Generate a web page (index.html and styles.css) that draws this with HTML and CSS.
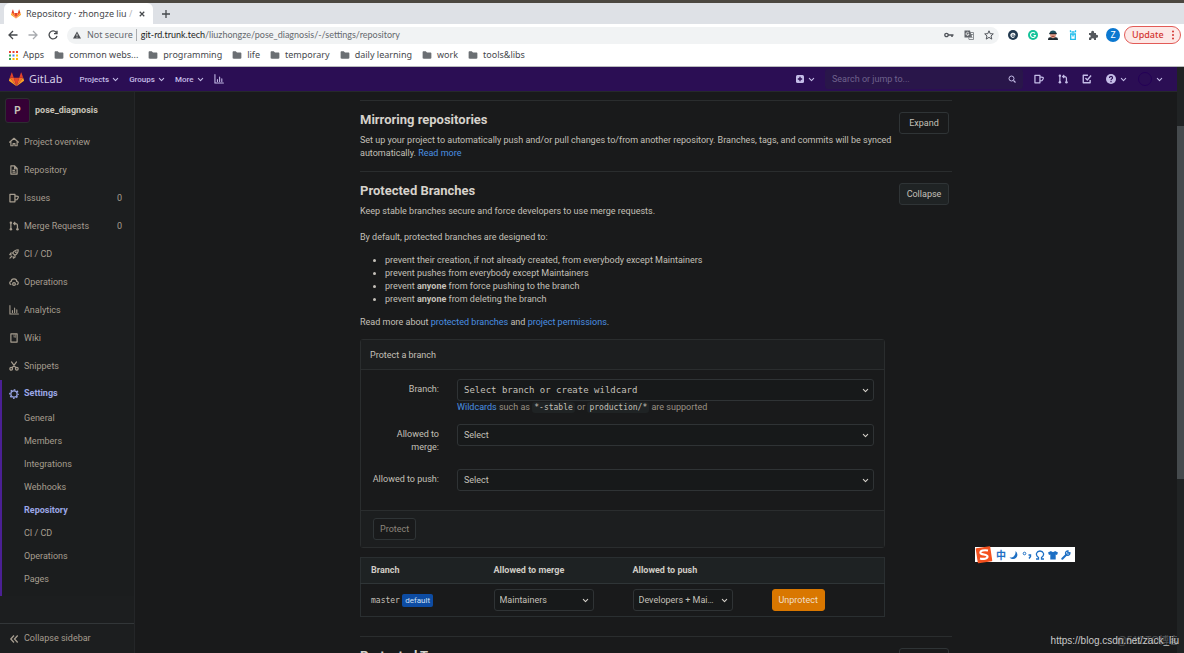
FILE: index.html
```html
<!DOCTYPE html>
<html lang="en">
<head>
<meta charset="utf-8">
<title>Repository · zhongze liu / pose_diagnosis</title>
<link rel="stylesheet" href="styles.css">
</head>
<body>
<svg class="defs" aria-hidden="true">
  <symbol id="tanuki" viewBox="0 0 36 34"><path fill="#e24329" d="M18 33 24.600 13H11.400z"/><path fill="#fc6d26" d="M18 33 11.400 13H2z"/><path fill="#fca326" d="M2 13 0 19c-.2.600 0 1.200.500 1.500L18 33z"/><path fill="#e24329" d="M2 13h9.400L7.400.800c-.2-.600-1.100-.600-1.300 0z"/><path fill="#fc6d26" d="M18 33 24.600 13H34z"/><path fill="#fca326" d="m34 13 2 6c.2.600 0 1.200-.5 1.500L18 33z"/><path fill="#e24329" d="M34 13h-9.400l4-12.200c.2-.6 1.100-.6 1.300 0z"/></symbol>
  <symbol id="chev" viewBox="0 0 16 16"><path d="m3 5.500 5 5 5-5" fill="none" stroke="currentColor" stroke-width="2.400" stroke-linecap="round" stroke-linejoin="round"/></symbol>
  <symbol id="folder" viewBox="0 0 16 16"><path d="M1 3.500C1 2.700 1.700 2 2.500 2H6l2 2h5.500c.800 0 1.500.700 1.500 1.500v7c0 .8-.7 1.500-1.500 1.500h-11C1.700 14 1 13.300 1 12.500z" fill="currentColor"/></symbol>
  <symbol id="home" viewBox="0 0 16 16"><path d="M.9 8.300 8 2l7.100 6.300M3 7v7h3.500v-3.500h3V14H13V7" fill="none" stroke="currentColor" stroke-width="1.900" stroke-linecap="round" stroke-linejoin="round"/></symbol>
  <symbol id="doc" viewBox="0 0 16 16"><path d="M3 1.500h6l4 4v9H3zM9 2v4h4M5.500 8.500h4M5.500 11.500h5" fill="none" stroke="currentColor" stroke-width="1.900" stroke-linejoin="round"/></symbol>
  <symbol id="issues" viewBox="0 0 16 16"><path d="M1.500 2h8v12h-8zM9.500 4.500l4.500 1c1 .3 1 1 .7 2L13 10.500 9.500 11" fill="none" stroke="currentColor" stroke-width="2" stroke-linejoin="round"/></symbol>
  <symbol id="merge" viewBox="0 0 16 16"><g fill="none" stroke="currentColor" stroke-width="2"><path d="M3 4v9M13.500 12V7c0-2-1-3-3-3H8"/><path d="M10 1.500 7.500 4 10 6.500"/></g><g fill="currentColor"><circle cx="3" cy="2.700" r="2"/><circle cx="3" cy="13.300" r="2"/><circle cx="13.500" cy="13.300" r="2"/></g></symbol>
  <symbol id="rocket" viewBox="0 0 16 16"><g fill="none" stroke="currentColor" stroke-width="1.800" stroke-linejoin="round" stroke-linecap="round"><path d="M14.800 1.200c-4 0-7 2-8.800 5.300l3.500 3.500c3.300-1.800 5.300-4.800 5.300-8.800zM6 6.500 3 6.300 1.200 9l3 .5M9.500 10l.2 3L7 14.800l-.5-3M4 12l-2.500 2.500"/><circle cx="11" cy="5" r=".6"/></g></symbol>
  <symbol id="cloud" viewBox="0 0 16 16"><g fill="none" stroke="currentColor" stroke-width="2" stroke-linecap="round"><path d="M3 12C.5 11 .5 7.500 3.500 7 4 1.500 12 1.500 12.500 7c3 .5 3 4 .5 5"/><circle cx="8" cy="11" r="2.200"/></g></symbol>
  <symbol id="chart" viewBox="0 0 16 16"><path d="M1.500 1v13.500H15M5.500 12V9M9 12V5M12.500 12V7.500" fill="none" stroke="currentColor" stroke-width="1.700" stroke-linecap="round"/></symbol>
  <symbol id="book" viewBox="0 0 16 16"><path d="M3 1.500h10v13H3z" fill="none" stroke="currentColor" stroke-width="1.900" stroke-linejoin="round"/><path d="M8 2v5l1.300-1.200L10.600 7V2" fill="none" stroke="currentColor" stroke-width="1.100"/></symbol>
  <symbol id="scissors" viewBox="0 0 16 16"><g fill="none" stroke="currentColor" stroke-width="1.900" stroke-linecap="round"><path d="m4 1.500 7 9.500M12 1.500 5 11"/><circle cx="3.500" cy="12.500" r="2.200"/><circle cx="12.500" cy="12.500" r="2.200"/></g></symbol>
  <symbol id="gear" viewBox="0 0 16 16"><g fill="none" stroke="currentColor"><circle cx="8" cy="8" r="5" stroke-width="2"/><circle cx="8" cy="8" r="6.800" stroke-width="2" stroke-dasharray="2.670 2.670" stroke-dashoffset="1.300"/></g></symbol>
  <symbol id="todo" viewBox="0 0 16 16"><path d="M9.500 2H2v12h11V9.500M5.500 6.500 8.500 9.500 14.500 2.500" fill="none" stroke="currentColor" stroke-width="2.200" stroke-linejoin="round"/></symbol>
</svg>

<div class="browser">
  <div class="tabs">
    <div class="tab">
      <svg class="i10"><use href="#tanuki"/></svg>
      <span class="tab-title">Repository · zhongze liu <span class="faded">/</span></span>
      <button class="bare" aria-label="Close tab"><svg class="i6" viewBox="0 0 8 8"><path d="m1 1 6 6M7 1 1 7" stroke="currentColor" stroke-width="1.600"/></svg></button>
    </div>
    <button class="bare plus" aria-label="New tab"><svg class="i8" viewBox="0 0 8 8"><path d="M4 0v8M0 4h8" stroke="currentColor" stroke-width="1.300"/></svg></button>
  </div>
  <div class="toolbar">
    <div class="nav-buttons">
      <button class="bare" aria-label="Back"><svg class="i10" viewBox="0 0 10 10"><path d="M9.500 5H1M5 1 1 5l4 4" fill="none" stroke="currentColor" stroke-width="1.300"/></svg></button>
      <button class="bare dim" aria-label="Forward"><svg class="i10" viewBox="0 0 10 10"><path d="M.5 5H9M5 1l4 4-4 4" fill="none" stroke="currentColor" stroke-width="1.300"/></svg></button>
      <button class="bare" aria-label="Reload"><svg class="i10" viewBox="0 0 10 10"><path d="M8.300 2.500A4 4 0 1 0 9 5.800M9 .7v3H6" fill="none" stroke="currentColor" stroke-width="1.300"/></svg></button>
    </div>
    <div class="address">
      <svg class="i8" viewBox="0 0 10 10"><path d="M5 .5 10 9.500H0z" fill="#4a4d51"/><path d="M5 3.500v3M5 7.200v1.200" stroke="#fff"/></svg>
      <span class="insecure">Not secure</span>
      <span class="url"><b>git-rd.trunk.tech</b>/liuzhongze/pose_diagnosis/-/settings/repository</span>
      <span class="address-icons">
        <svg class="i10" viewBox="0 0 10 10"><circle cx="2.500" cy="5" r="1.700" fill="none" stroke="#50545a" stroke-width="1.300"/><path d="M4 5h5.500M8 5v2" stroke="#50545a" stroke-width="1.500"/></svg>
        <svg class="i10" viewBox="0 0 10 10"><path d="M.5.500h5.500l2 7H.5z" fill="#5f6368"/><path d="M6 2.500h3.500v7H5l-.5-2M6 4.500h3M7.500 4v1l-1.500 2.500M6.500 5.500 8.500 8" fill="none" stroke="#73777c" stroke-width=".8"/><path d="M4.800 3A1.500 1.500 0 1 0 5 4.300H3.500" fill="none" stroke="#fff" stroke-width=".8"/></svg>
        <svg class="i10" viewBox="0 0 10 10"><path d="m5 .8 1.200 2.900 3.100.2L7 6l.8 3.100L5 7.400 2.200 9.100 3 6 .7 3.900l3.100-.2z" fill="none" stroke="#50545a"/></svg>
      </span>
    </div>
    <div class="extensions">
      <svg class="i10" viewBox="0 0 10 10"><circle cx="5" cy="5" r="5" fill="#22394f"/><path d="M2.900 5h4A2 2 0 1 0 6.500 6.500" fill="none" stroke="#fff" stroke-width="1.200"/></svg>
      <svg class="i10" viewBox="0 0 10 10"><circle cx="5" cy="5" r="5" fill="#15c39a"/><path d="M7 3.400A2.500 2.500 0 1 0 7.500 5.500H5.500" fill="none" stroke="#fff" stroke-width="1.100"/></svg>
      <svg class="i10" viewBox="0 0 10 10"><path d="M1.500 3.500C1.500-.5 8.500-.5 8.500 3.500z" fill="#1e4f5e"/><path d="M2 3h6v3L6.500 8h-3L2 6z" fill="#e8a590"/><path d="M1.300 2.900h7.400v1.400H1.300zM0 10c0-2.500 1.500-3 3.300-2.500L5 8.300l1.700-.8C8.500 7 10 7.500 10 10z" fill="#1e2930"/><path d="M3.500 6.300h3" stroke="#8b3a2d"/></svg>
      <svg class="i10" viewBox="0 0 10 10"><path d="M2.700 4h4.600v5.300H2.700zM2.500 2.300V.3M7.500 2.300V.3M3.500 2h3M5 4v2.500" fill="none" stroke="#20bdeb" stroke-width="1.300"/></svg>
      <svg class="i10" viewBox="0 0 10 10"><path d="M1 3h2.300a1.500 1.500 0 1 1 2.700 0h2v2a1.500 1.500 0 1 1 0 2.700V10H6a1.400 1.400 0 1 0-2.700 0H1V7.500a1.300 1.300 0 1 0 0-2.500z" fill="#55595e"/></svg>
      <span class="profile">Z</span>
      <button class="update">Update <svg class="dots" viewBox="0 0 2 10"><circle cx="1" cy="1.500" r="1"/><circle cx="1" cy="5" r="1"/><circle cx="1" cy="8.500" r="1"/></svg></button>
    </div>
  </div>
  <nav class="bookmarks" aria-label="Bookmarks">
    <a href="#"><svg class="i9" viewBox="0 0 9 9"><g fill="#ea4335"><path d="M0 0h2v2H0zM3.500 0h2v2h-2zM7 0h2v2H7z"/></g><path fill="#34a853" d="M0 3.500h2v2H0zM0 7h2v2H0z"/><path fill="#4285f4" d="M3.500 3.500h2v2h-2z"/><path fill="#fbbc05" d="M7 3.500h2v2H7zM3.500 7h2v2h-2zM7 7h2v2H7z"/></svg>Apps</a>
    <a href="#"><svg class="i10"><use href="#folder"/></svg>common webs...</a>
    <a href="#"><svg class="i10"><use href="#folder"/></svg>programming</a>
    <a href="#"><svg class="i10"><use href="#folder"/></svg>life</a>
    <a href="#"><svg class="i10"><use href="#folder"/></svg>temporary</a>
    <a href="#"><svg class="i10"><use href="#folder"/></svg>daily learning</a>
    <a href="#"><svg class="i10"><use href="#folder"/></svg>work</a>
    <a href="#"><svg class="i10"><use href="#folder"/></svg>tools&amp;libs</a>
  </nav>
</div>

<div class="viewport">
  <div class="app">
    <header class="topbar">
      <a class="brand" href="#"><svg class="i15"><use href="#tanuki"/></svg>GitLab</a>
      <nav class="menus" aria-label="Main">
        <button class="bare">Projects <svg class="i7"><use href="#chev"/></svg></button>
        <button class="bare">Groups <svg class="i7"><use href="#chev"/></svg></button>
        <button class="bare">More <svg class="i7"><use href="#chev"/></svg></button>
        <button class="bare" aria-label="Analytics"><svg class="i10"><use href="#chart"/></svg></button>
      </nav>
      <button class="bare create" aria-label="New"><svg class="i8" viewBox="0 0 8 8"><rect width="8" height="8" rx="1.500" fill="currentColor"/><path d="M4 1.800v4.400M1.800 4h4.400" stroke="#2b0e54" stroke-width="1.300"/></svg><svg class="i7"><use href="#chev"/></svg></button>
      <div class="search">
        <input type="text" placeholder="Search or jump to..." aria-label="Search or jump to">
        <svg class="i8" viewBox="0 0 16 16"><circle cx="7" cy="7" r="5" fill="none" stroke="currentColor" stroke-width="2"/><path d="m11 11 4 4" stroke="currentColor" stroke-width="2.200"/></svg>
      </div>
      <nav class="user-menu" aria-label="User">
        <button class="bare" aria-label="Issues"><svg class="i10"><use href="#issues"/></svg></button>
        <button class="bare" aria-label="Merge requests"><svg class="i10"><use href="#merge"/></svg></button>
        <button class="bare" aria-label="To-dos"><svg class="i10"><use href="#todo"/></svg></button>
        <button class="bare" aria-label="Help"><svg class="i10" viewBox="0 0 10 10"><circle cx="5" cy="5" r="5" fill="currentColor"/><path d="M3.500 3.900C3.500 1.900 6.600 2 6.500 3.900 6.500 5 5 4.800 5 6.300M5 7v1.200" fill="none" stroke="#2b0e54" stroke-width="1.200"/></svg><svg class="i7"><use href="#chev"/></svg></button>
        <button class="bare account" aria-label="Account"><span class="avatar"></span><svg class="i7"><use href="#chev"/></svg></button>
      </nav>
    </header>
    <div class="page">
      <aside class="sidebar">
        <a class="project" href="#"><span class="letter">P</span>pose_diagnosis</a>
        <nav class="side-nav" aria-label="Project">
          <a href="#"><svg class="i10"><use href="#home"/></svg>Project overview</a>
          <a href="#"><svg class="i10"><use href="#doc"/></svg>Repository</a>
          <a href="#"><svg class="i10"><use href="#issues"/></svg>Issues<span class="count">0</span></a>
          <a href="#"><svg class="i10"><use href="#merge"/></svg>Merge Requests<span class="count">0</span></a>
          <a href="#"><svg class="i10"><use href="#rocket"/></svg>CI / CD</a>
          <a href="#"><svg class="i10"><use href="#cloud"/></svg>Operations</a>
          <a href="#"><svg class="i10"><use href="#chart"/></svg>Analytics</a>
          <a href="#"><svg class="i10"><use href="#book"/></svg>Wiki</a>
          <a href="#"><svg class="i10"><use href="#scissors"/></svg>Snippets</a>
          <div class="active-group">
            <a class="active" href="#"><svg class="i10"><use href="#gear"/></svg>Settings</a>
            <div class="sub-nav">
              <a href="#">General</a>
              <a href="#">Members</a>
              <a href="#">Integrations</a>
              <a href="#">Webhooks</a>
              <a class="active" href="#">Repository</a>
              <a href="#">CI / CD</a>
              <a href="#">Operations</a>
              <a href="#">Pages</a>
            </div>
          </div>
        </nav>
        <button class="bare collapse"><svg class="i10" viewBox="0 0 10 10"><path d="M5 1.500 1.800 5 5 8.500M8.700 1.500 5.500 5l3.200 3.500" fill="none" stroke="currentColor" stroke-width="1.300"/></svg>Collapse sidebar</button>
      </aside>

      <main class="content">
        <section class="settings">
          <button class="btn toggle">Expand</button>
          <h4>Mirroring repositories</h4>
          <p>Set up your project to automatically push and/or pull changes to/from another repository. Branches, tags, and commits will be synced automatically. <a href="#">Read more</a></p>
        </section>
        <section class="settings">
          <button class="btn toggle open">Collapse</button>
          <h4>Protected Branches</h4>
          <p>Keep stable branches secure and force developers to use merge requests.</p>
          <div class="details">
            <p class="lead">By default, protected branches are designed to:</p>
            <ul>
              <li>prevent their creation, if not already created, from everybody except Maintainers</li>
              <li>prevent pushes from everybody except Maintainers</li>
              <li>prevent <strong>anyone</strong> from force pushing to the branch</li>
              <li>prevent <strong>anyone</strong> from deleting the branch</li>
            </ul>
            <p>Read more about <a href="#">protected branches</a> and <a href="#">project permissions</a>.</p>

            <form class="card">
              <div class="card-head">Protect a branch</div>
              <div class="card-body">
                <label for="branch">Branch:</label>
                <div class="field">
                  <div class="select mono"><select id="branch"><option>Select branch or create wildcard</option></select><svg class="i7"><use href="#chev"/></svg></div>
                  <div class="hint"><a href="#">Wildcards</a> such as <code>*-stable</code> or <code>production/*</code> are supported</div>
                </div>
                <label for="merge-access">Allowed to merge:</label>
                <div class="field"><div class="select"><select id="merge-access"><option>Select</option></select><svg class="i7"><use href="#chev"/></svg></div></div>
                <label for="push-access">Allowed to push:</label>
                <div class="field"><div class="select"><select id="push-access"><option>Select</option></select><svg class="i7"><use href="#chev"/></svg></div></div>
              </div>
              <div class="card-foot"><button class="btn" type="button" disabled>Protect</button></div>
            </form>

            <table class="branches">
              <colgroup><col class="c-branch"><col class="c-access"><col class="c-access"><col></colgroup>
              <thead><tr><th>Branch</th><th>Allowed to merge</th><th>Allowed to push</th><th></th></tr></thead>
              <tbody><tr>
                <td><span class="ref">master</span> <span class="badge">default</span></td>
                <td><div class="select small"><select aria-label="Allowed to merge"><option>Maintainers</option></select><svg class="i7"><use href="#chev"/></svg></div></td>
                <td><div class="select small"><select aria-label="Allowed to push"><option>Developers + Mai…</option></select><svg class="i7"><use href="#chev"/></svg></div></td>
                <td><button class="btn warning">Unprotect</button></td>
              </tr></tbody>
            </table>
          </div>
        </section>
        <section class="settings">
          <button class="btn toggle">Expand</button>
          <h4>Protected Tags</h4>
        </section>
      </main>
    </div>
  </div>
  <div class="scrollbar"><div class="thumb"></div></div>
</div>

<div class="ime">
  <svg class="ime-logo" viewBox="0 0 18 18"><path d="M1.500 3 14.500 1l2 13.500-13 2z" fill="#f4511e" stroke="#f4511e" stroke-width="1.500" stroke-linejoin="round"/><path d="M13 4.500C9 3.800 5 4.500 5.500 7c.5 2 7 1 7 3.500 0 2.300-4 3-7.500 2" fill="none" stroke="#fff" stroke-width="2.200"/></svg>
  <span>中</span>
  <svg class="i10" viewBox="0 0 10 10"><path d="M6.500 1c5 4.500-1 11-6 6.500C4.500 8 7 4.500 6.500 1z" fill="currentColor"/></svg>
  <svg class="i10" viewBox="0 0 10 10"><circle cx="2.500" cy="3.500" r="1.300" fill="none" stroke="currentColor"/><path d="M6.500 5h2v1.500L7 8.500" fill="none" stroke="currentColor" stroke-width="1.400"/></svg>
  <svg class="i10" viewBox="0 0 10 10"><path d="M1 9h2.500V7.500C-.5 4.500 2 1 5 1s5.500 3.500 1.500 6.500V9H9" fill="none" stroke="currentColor" stroke-width="1.300"/></svg>
  <svg class="i10" viewBox="0 0 10 10"><path d="M3 1c1 1.300 3 1.300 4 0l3 1.500L9 5l-1.300-.5V9.500H2.300v-5L1 5 0 2.500z" fill="currentColor"/></svg>
  <svg class="i10" viewBox="0 0 10 10"><path d="m1.300 8.700 4.200-4.200" stroke="currentColor" stroke-width="2" stroke-linecap="round"/><path d="M8.900 2.800A2.200 2.200 0 1 1 7 .9L6.800 3z" fill="none" stroke="currentColor" stroke-width="1.300"/></svg>
</div>
<div class="watermark"><span class="wm-back">@51CTO博客</span><span>https://blog.csdn.net/zack_liu</span></div>
</body>
</html>
```
FILE: styles.css
```css
* { box-sizing: border-box; }
body {
  margin: 0;
  height: 100vh;
  display: flex;
  flex-direction: column;
  overflow: hidden;
  background: #191a1b;
  color: #c4c0b9;
  font: 9px/13px Roboto, "Liberation Sans", sans-serif;
}
a { color: #4a90e2; text-decoration: none; }
svg { flex: none; display: block; }
.defs { position: absolute; width: 0; height: 0; }
.i6 { width: 6px; height: 6px; }
.i7 { width: 7px; height: 7px; }
.i8 { width: 8px; height: 8px; }
.i9 { width: 9px; height: 9px; }
.i10 { width: 10px; height: 10px; }
.i15 { width: 15px; height: 15px; }
.bare {
  display: flex;
  align-items: center;
  gap: 4px;
  padding: 0;
  border: 0;
  background: none;
  color: inherit;
  font: inherit;
}

/* Browser chrome */
.browser {
  flex: none;
  background: #fff;
  color: #46494d;
  font: 9px/12px "Noto Sans", "Open Sans", sans-serif;
  border-bottom: 1px solid #b9bbbd;
}
.tabs {
  display: flex;
  height: 24px;
  padding-left: 4px;
  border-top: 3px solid #4b4740;
  background: #dee1e6;
}
.tab {
  display: flex;
  align-items: center;
  gap: 5px;
  width: 149px;
  padding: 0 8px 0 7px;
  border-radius: 6px 6px 0 0;
  background: #fff;
}
.tab-title { flex: 1; white-space: nowrap; overflow: hidden; }
.faded { color: #b5b7ba; }
.plus { margin-left: 9px; }
.toolbar { display: flex; align-items: center; height: 22px; padding-right: 3px; }
.nav-buttons { display: flex; gap: 10px; padding: 0 9px 0 8px; }
.dim { color: #a8abaf; }
.address {
  flex: 1;
  display: flex;
  align-items: center;
  height: 17px;
  padding: 0 5px 0 6px;
  border-radius: 9px;
  background: #f1f3f4;
}
.insecure { margin: 0 4px 0 6px; padding-right: 3px; border-right: 1px solid #aaadb0; color: #65696e; }
.url { flex: 1; color: #65696e; font-family: Lato, sans-serif; }
.url b { font-weight: 400; color: #222; }
.address-icons { display: flex; gap: 10px; }
.extensions { display: flex; align-items: center; gap: 10px; padding-left: 9px; }
.profile {
  width: 14px;
  height: 14px;
  margin-left: -2px;
  border-radius: 50%;
  background: #0b78d0;
  color: #fff;
  line-height: 14px;
  text-align: center;
}
.update {
  display: flex;
  justify-content: space-between;
  align-items: center;
  width: 57px;
  height: 18px;
  margin-left: -6px;
  padding: 0 6px 0 7px;
  border: 1px solid #e25b57;
  border-radius: 9px;
  background: #fce8e6;
  color: #d33530;
  font: 500 9px/12px "Noto Sans", sans-serif;
}
.dots { width: 2px; height: 10px; fill: currentColor; }
.bookmarks { display: flex; align-items: center; gap: 10px; height: 20px; padding: 0 9px 2px; }
.bookmarks a { display: flex; align-items: center; gap: 5px; color: #46494d; }
.bookmarks use { color: #6b6f73; }

/* Application shell */
.viewport { flex: 1; min-height: 0; display: flex; }
.app { flex: 1; min-width: 0; display: flex; flex-direction: column; }
.scrollbar { width: 7px; padding-top: 59px; background: #202324; }
.thumb { height: 67%; background: #454a4d; }
.topbar {
  flex: none;
  display: flex;
  align-items: center;
  height: 25px;
  padding: 0 14px 0 9px;
  border-bottom: 1px solid #26292b;
  background: #2b0e54;
  color: #c5bde8;
}
.brand { display: flex; align-items: center; gap: 5px; color: #d6d0e6; font: 11px/16px "Noto Sans", sans-serif; }
.menus { display: flex; gap: 10px; margin-left: 17px; font-weight: 500; font-size: 8px; flex: 1; }
.menus .bare { gap: 3px; }
.create { margin-right: 10px; }
.search {
  display: flex;
  align-items: center;
  width: 198px;
  height: 20px;
  padding: 0 7px;
  border-radius: 3px;
  background: #29164a;
}
.search input { flex: 1; min-width: 0; padding: 0; border: 0; outline: 0; background: none; color: inherit; font: inherit; }
.search input::placeholder { color: #6f628c; opacity: 1; }
.user-menu { display: flex; align-items: center; gap: 14px; margin-left: 11px; }
.account { margin-left: -3px; }
.avatar { width: 14px; height: 14px; border: 1px solid #240057; border-radius: 50%; }
.page { flex: 1; min-height: 0; display: flex; }

/* Sidebar */
.sidebar {
  flex: none;
  display: flex;
  flex-direction: column;
  width: 135px;
  border-right: 1px solid #242628;
  background: #1c1e1f;
  color: #a69d8f;
}
.sidebar a { color: inherit; }
.project { display: flex; align-items: center; gap: 5px; padding: 6px 5px 5px; font-weight: 700; }
.sidebar .project { color: #c8c2b8; }
.letter {
  width: 25px;
  height: 25px;
  border: 1px solid #2c2e30;
  border-radius: 3px;
  background: #350035;
  font-size: 10px;
  line-height: 23px;
  text-align: center;
}
.side-nav { flex: 1; }
.side-nav > a, .active-group > a { display: flex; align-items: center; gap: 5px; height: 28px; padding: 0 10px 0 9px; }
.count { margin-left: auto; padding: 0 2px; }
.active-group { border-left: 2px solid #4b2094; background: #1b1d1e; }
.active-group > a { height: 27px; padding-left: 7px; }
.sub-nav a { display: block; height: 23px; padding-left: 22px; line-height: 23px; }
.sub-nav { padding-bottom: 5px; }
.sidebar .active { color: #9aa6e6; font-weight: 700; }
.collapse { gap: 5px; height: 30px; padding-left: 9px; border-top: 1px solid #323638; }

/* Settings page */
.content { flex: 1; width: 100%; max-width: 592px; margin: 0 auto; padding-top: 8px; }
.settings { border-top: 1px solid #2a2d2e; padding: 11px 0; }
.settings h4 { margin: 0 0 6px; color: #d6d2cb; font-size: 13px; line-height: 16px; font-weight: 700; }
.settings p { margin: 0; padding-right: 55px; }
.btn {
  height: 22px;
  padding: 0 6px;
  border: 1px solid #2f3436;
  border-radius: 3px;
  background: #191a1b;
  color: #c4c0b9;
  font: inherit;
}
.btn:disabled { color: #8d867b; }
.toggle { float: right; width: 50px; margin-right: 3px; padding: 0; }
.open { background: #1f2324; }
.details { padding: 13px 67px 8px 0; }
.details p { padding: 0; }
ul { margin: 10px 0; padding-left: 25px; }
strong { font-weight: 700; }
.card { margin: 10px 0 9px; border: 1px solid #2a2d2e; border-radius: 3px; }
.card-head { padding: 9px; border-bottom: 1px solid #2a2d2e; background: #1c1e1f; height: 30px; line-height: 12px; }
.card-body {
  display: grid;
  grid-template-columns: 68px 1fr;
  column-gap: 18px;
  row-gap: 10px;
  padding: 9px 10px 19px;
}
.card-body label { padding-top: 4px; text-align: right; }
.field { min-height: 35px; }
.field:last-child { min-height: 22px; }
.select { display: flex; align-items: center; position: relative; height: 22px; }
.select select {
  appearance: none;
  width: 100%;
  height: 100%;
  padding: 0 18px 0 6px;
  border: 1px solid #2f3335;
  border-radius: 3px;
  background: #17191a;
  color: #c4c0b9;
  font: inherit;
}
.select svg { position: absolute; right: 5px; pointer-events: none; color: #d6d2cb; }
.mono select { font-family: "DejaVu Sans Mono", monospace; }
.small { width: 100px; }
.small select { padding-left: 5px; padding-right: 14px; }
.hint { color: #9a9184; }
code { padding: 1px 2px; border-radius: 3px; background: #1f2324; color: #c4c0b9; font: 8px/12px "DejaVu Sans Mono", monospace; }
.card-foot { padding: 7px 12px; border-top: 1px solid #2a2d2e; background: #1c1e1f; }
.branches { width: 100%; table-layout: fixed; border-collapse: collapse; border: 1px solid #2a2f31; }
.c-branch { width: 123px; }
.c-access { width: 139px; }
.branches th { height: 26px; padding: 0 10px; border-bottom: 1px solid #2f3537; background: #1e2223; text-align: left; font-weight: 700; color: #d0ccc5; }
.branches td { height: 33px; padding: 0 10px; white-space: nowrap; }
.ref { font-family: "DejaVu Sans Mono", monospace; font-size: 8px; }
.badge { display: inline-block; padding: 0 3px; border-radius: 2px; background: #0d4ca3; color: #cfe0f5; font-size: 8px; }
.warning { border-color: #d97700; background: #d97700; color: #f0dfc8; }

/* Floating input-method bar and page stamp */
.ime {
  position: absolute;
  right: 109px;
  bottom: 91px;
  display: flex;
  align-items: center;
  gap: 3px;
  height: 15px;
  padding-right: 4px;
  background: #fff;
  color: #1d6fc4;
  font: 700 10px/15px "Noto Sans CJK SC", sans-serif;
}
.ime-logo { width: 18px; height: 18px; }
.watermark { position: absolute; right: 5px; bottom: 4px; color: #c9c9c9; font: 10px/16px "Liberation Sans", sans-serif; }
.wm-back { position: absolute; right: 0; color: #55585a; font-family: "Liberation Sans", "Noto Sans CJK SC", sans-serif; z-index: -1; }
```
